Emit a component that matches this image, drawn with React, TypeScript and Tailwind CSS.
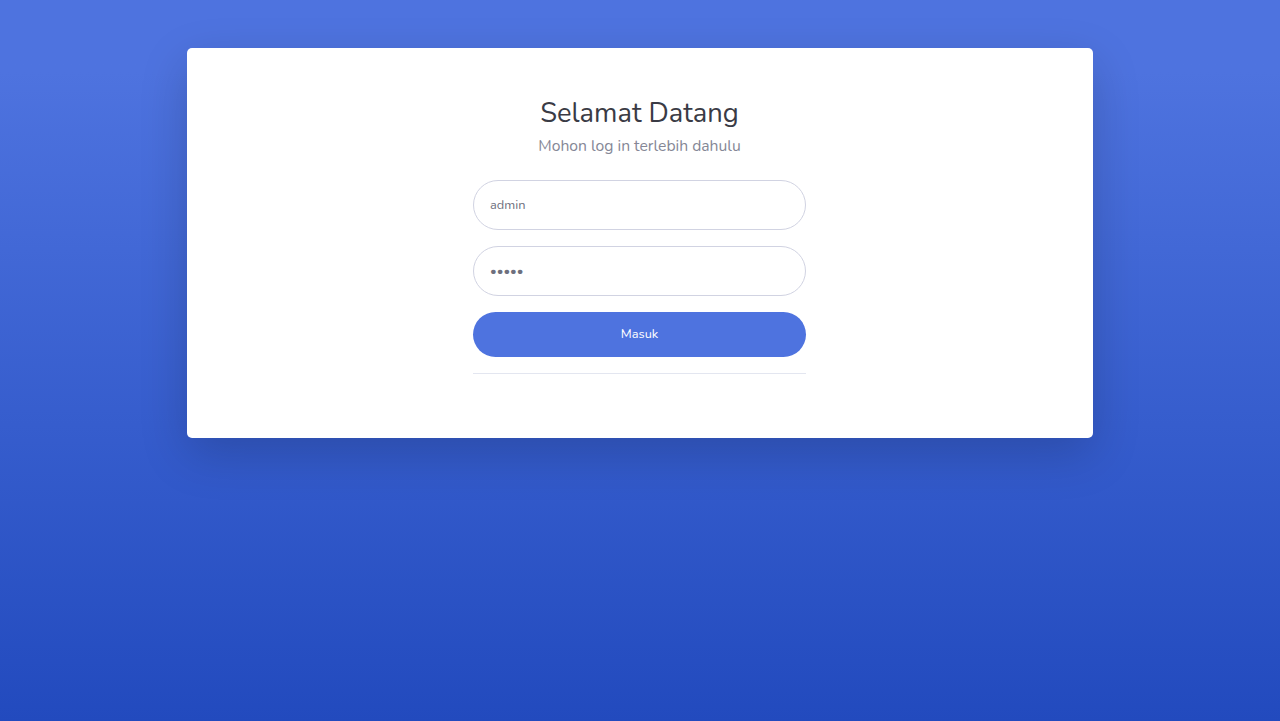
export default function App() {
  return (
    <div className="min-h-[721px] w-full bg-linear-to-b from-[#4e73df] from-10% to-[#224abe] font-['Nunito',Lato,'Noto_Sans',sans-serif] pt-12">
      <div className="mx-auto w-[906px] rounded-[5px] bg-white p-12 shadow-[0_1rem_3rem_rgba(0,0,0,0.175)]">
        <div className="ml-[238px] w-[333px]">
          <div className="text-center">
            <h1 className="text-[27.3px] leading-[34px] text-[#3a3b45]">Selamat Datang</h1>
            <p className="mt-1 text-[15.7px] leading-6 text-[#858796]">Mohon log in terlebih dahulu</p>
          </div>
          <form className="mt-[22px] flex flex-col gap-4" onSubmit={(e) => e.preventDefault()}>
            <input
              type="text"
              readOnly
              defaultValue="admin"
              className="h-[50px] w-full rounded-full border border-[#d1d3e2] px-4 text-[12.8px] text-[#6e707e] outline-none"
            />
            <input
              type="password"
              readOnly
              defaultValue="admin"
              className="h-[50px] w-full rounded-full border border-[#d1d3e2] px-4 text-[12.8px] text-[#6e707e] outline-none"
            />
            <button
              type="submit"
              className="h-[45px] w-full rounded-full bg-[#4e73df] text-[12.8px] text-white"
            >
              Masuk
            </button>
          </form>
          <hr className="my-4 border-t border-[#e3e6f0]" />
        </div>
      </div>
    </div>
  );
}
